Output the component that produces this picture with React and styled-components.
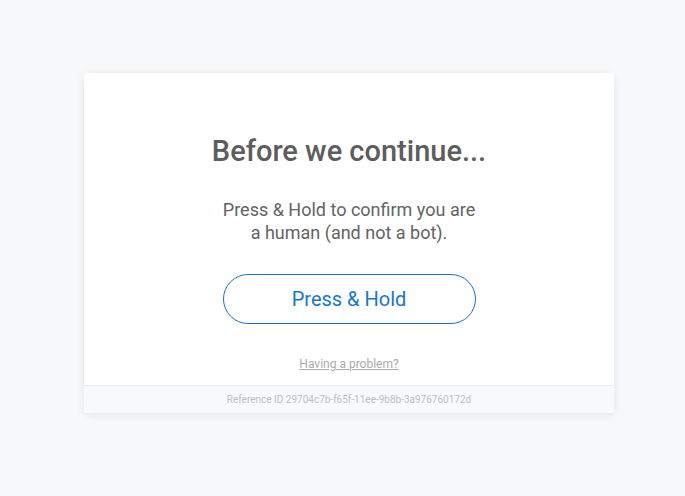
import React from "react";
import styled, { createGlobalStyle } from "styled-components";

const Global = createGlobalStyle`
  html, body { margin: 0; padding: 0; background: #f7f8fa; }
  body { font-family: Roboto, "Noto Sans", sans-serif; }
`;

const Page = styled.div`
  width: 685px;
  height: 496px;
  display: flex;
  justify-content: flex-start;
  padding: 73px 0 0 84px;
  box-sizing: border-box;
`;

const Card = styled.div`
  width: 530px;
  height: 340px;
  background: #ffffff;
  border-radius: 3px;
  box-shadow: 0 2px 10px rgba(0, 0, 0, 0.08);
  display: flex;
  flex-direction: column;
  overflow: hidden;
`;

const Body = styled.div`
  flex: 1;
  display: flex;
  flex-direction: column;
  align-items: center;
  padding-top: 61px;
`;

const Title = styled.h1`
  margin: 0;
  font-size: 29px;
  line-height: 35px;
  font-weight: 500;
  color: #5d5d5d;
`;

const Text = styled.p`
  margin: 29px 0 0;
  font-size: 18px;
  line-height: 23px;
  color: #636363;
  text-align: center;
`;

const HoldButton = styled.button`
  margin-top: 30px;
  width: 253px;
  height: 50px;
  border: 1px solid #1a72be;
  border-radius: 25px;
  background: #fff;
  color: #1a76c8;
  font-family: Roboto, sans-serif;
  font-size: 20px;
  cursor: pointer;
`;

const Problem = styled.a`
  margin-top: 33px;
  font-size: 12px;
  line-height: 14px;
  color: #ababab;
  text-decoration: underline;
`;

const Footer = styled.div`
  height: 27px;
  border-top: 1px solid #ececee;
  background: #f8f9fb;
  display: flex;
  align-items: center;
  justify-content: center;
  font-size: 10px;
  color: #bcbfc3;
`;

export default function App() {
  return (
    <>
      <Global />
      <Page>
        <Card>
          <Body>
            <Title>Before we continue...</Title>
            <Text>
              Press &amp; Hold to confirm you are
              <br />
              a human (and not a bot).
            </Text>
            <HoldButton>Press &amp; Hold</HoldButton>
            <Problem>Having a problem?</Problem>
          </Body>
          <Footer>Reference ID 29704c7b-f65f-11ee-9b8b-3a976760172d</Footer>
        </Card>
      </Page>
    </>
  );
}
